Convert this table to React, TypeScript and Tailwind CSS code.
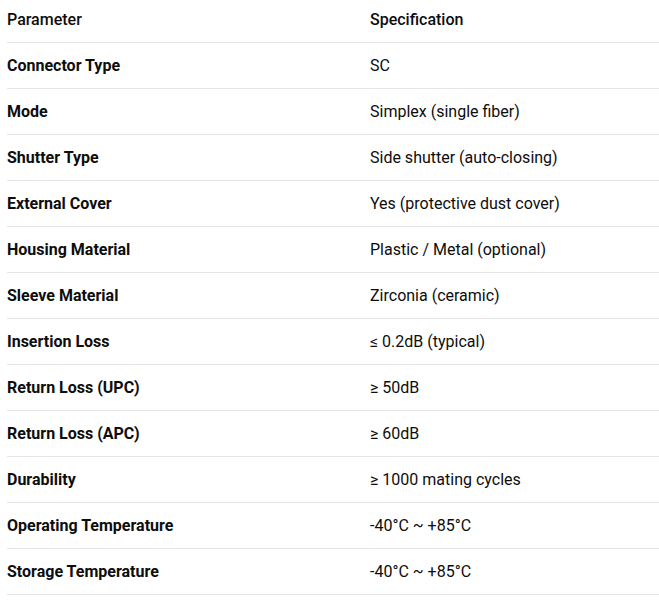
const rows: [string, string][] = [
  ['Connector Type', 'SC'],
  ['Mode', 'Simplex (single fiber)'],
  ['Shutter Type', 'Side shutter (auto-closing)'],
  ['External Cover', 'Yes (protective dust cover)'],
  ['Housing Material', 'Plastic / Metal (optional)'],
  ['Sleeve Material', 'Zirconia (ceramic)'],
  ['Insertion Loss', '≤ 0.2dB (typical)'],
  ['Return Loss (UPC)', '≥ 50dB'],
  ['Return Loss (APC)', '≥ 60dB'],
  ['Durability', '≥ 1000 mating cycles'],
  ['Operating Temperature', '-40°C ~ +85°C'],
  ['Storage Temperature', '-40°C ~ +85°C'],
];

export default function App() {
  return (
    <div className="bg-white pl-[7px] font-['Roboto',sans-serif] text-[16px] text-[#0d0d0d]">
      {/* header */}
      <div className="grid grid-cols-[363px_1fr] h-[43px] pb-[2px] items-center border-b border-[#e5e5e5] font-medium">
        <div>Parameter</div>
        <div>Specification</div>
      </div>
      {rows.map(([k, v]) => (
        <div
          key={k}
          className="grid grid-cols-[363px_1fr] h-[46px] items-center border-b border-[#e5e5e5]"
        >
          <div className="font-bold">{k}</div>
          <div>{v}</div>
        </div>
      ))}
    </div>
  );
}
